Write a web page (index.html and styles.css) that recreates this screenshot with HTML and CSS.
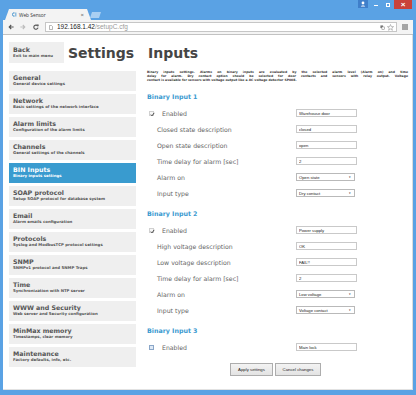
FILE: index.html
```html
<!DOCTYPE html>
<html lang="en">
<head>
<meta charset="utf-8">
<title>Web Sensor</title>
<link rel="stylesheet" href="styles.css">
</head>
<body>
<div class="window">
  <div class="titlebar">
    <div class="tabstrip">
      <div class="tab">
        <svg class="favicon" viewBox="0 0 6 6"><path d="M3.2 1.1A2 2 0 1 0 3.2 4.9" fill="none" stroke="#2b86c8" stroke-width="1"/><path d="M4.6 0.6V5.4" stroke="#2b86c8" stroke-width="0.9"/></svg>
        <span class="tab-title">Web Sensor</span>
        <span class="tab-close">×</span>
      </div>
      <div class="newtab"></div>
    </div>
    <div class="caption">
      <div class="cap-user"><svg viewBox="0 0 10 8"><circle cx="5" cy="3" r="1.4" fill="#fff"/><path d="M2.8 6.6C2.8 5.1 7.2 5.1 7.2 6.6Z" fill="#fff"/></svg></div>
      <div class="cap-btn"><span class="cap-min"></span></div>
      <div class="cap-btn"><span class="cap-max"></span></div>
      <div class="cap-close">×</div>
    </div>
  </div>
  <div class="toolbar">
    <svg class="nav-icon" viewBox="0 0 6 6"><path d="M5.6 3H1.2M3.2 1L1.2 3L3.2 5" fill="none" stroke="#555" stroke-width="1.1"/></svg>
    <svg class="nav-icon fwd" viewBox="0 0 6 6"><path d="M0.4 3H4.8M2.8 1L4.8 3L2.8 5" fill="none" stroke="#bdbdbd" stroke-width="1.1"/></svg>
    <svg class="nav-icon reload" viewBox="0 0 6 6"><path d="M4.8 2.2A2.1 2.1 0 1 0 5 3.6" fill="none" stroke="#555" stroke-width="1.1"/><path d="M3.6 0.6H5.6V2.6Z" fill="#555"/></svg>
    <div class="omnibox">
      <svg class="page-icon" viewBox="0 0 4 5"><path d="M0.5 0.5H2.5L3.5 1.5V4.5H0.5Z" fill="#fff" stroke="#888" stroke-width="0.6"/></svg>
      <span class="url"><span class="host">192.168.1.42</span><span class="path">/setupC.cfg</span></span>
      <svg class="omni-icon" viewBox="0 0 6 6"><rect x="0.5" y="0.5" width="3.2" height="3.2" fill="#777"/><rect x="2.3" y="2.3" width="3.2" height="3.2" fill="#fff" stroke="#777" stroke-width="0.6"/></svg>
      <svg class="omni-icon star" viewBox="0 0 8 8"><path d="M4 0.6L5 3H7.5L5.5 4.6L6.2 7.2L4 5.7L1.8 7.2L2.5 4.6L0.5 3H3Z" fill="none" stroke="#888" stroke-width="0.6"/></svg>
    </div>
    <svg class="menu-icon" viewBox="0 0 6 6"><path d="M0 1H6M0 3H6M0 5H6" stroke="#555" stroke-width="1"/></svg>
  </div>
  <div class="page">
    <div class="layout">
      <div class="head-left">
        <a class="back">
          <span class="item-title">Back</span>
          <span class="item-sub">Exit to main menu</span>
        </a>
        <h1 class="title">Settings</h1>
      </div>
      <h1 class="title main-title">Inputs</h1>

      <nav class="menu">
        <a class="item"><span class="item-title">General</span><span class="item-sub">General device settings</span></a>
        <a class="item"><span class="item-title">Network</span><span class="item-sub">Basic settings of the network interface</span></a>
        <a class="item"><span class="item-title">Alarm limits</span><span class="item-sub">Configuration of the alarm limits</span></a>
        <a class="item"><span class="item-title">Channels</span><span class="item-sub">General settings of the channels</span></a>
        <a class="item active"><span class="item-title">BIN Inputs</span><span class="item-sub">Binary inputs settings</span></a>
        <a class="item"><span class="item-title">SOAP protocol</span><span class="item-sub">Setup SOAP protocol for database system</span></a>
        <a class="item"><span class="item-title">Email</span><span class="item-sub">Alarm emails configuration</span></a>
        <a class="item"><span class="item-title">Protocols</span><span class="item-sub">Syslog and ModbusTCP protocol settings</span></a>
        <a class="item"><span class="item-title">SNMP</span><span class="item-sub">SNMPv1 protocol and SNMP Traps</span></a>
        <a class="item"><span class="item-title">Time</span><span class="item-sub">Synchronization with NTP server</span></a>
        <a class="item"><span class="item-title">WWW and Security</span><span class="item-sub">Web server and Security configuration</span></a>
        <a class="item"><span class="item-title">MinMax memory</span><span class="item-sub">Timestamps, clear memory</span></a>
        <a class="item"><span class="item-title">Maintenance</span><span class="item-sub">Factory defaults, info, etc.</span></a>
      </nav>

      <main class="content">
        <p class="intro"><span class="line just">Binary inputs settings. Alarms on binary inputs are evaluated by the selected alarm level (Alarm on) and time</span> <span class="line just">delay for alarm. Dry contact option should be selected for door contacts and sensors with relay output. Voltage</span> <span class="line">contact is available for sensors with voltage output like a AC voltage detector SP008.</span></p>

        <section class="group">
          <h2>Binary Input 1</h2>
          <div class="row"><div class="lbl check-lbl"><span class="cb checked"><svg viewBox="0 0 5 5"><path d="M0.9 2.6L2 3.8L4.2 0.9" fill="none" stroke="#333" stroke-width="0.9"/></svg></span>Enabled</div><input class="field" type="text" value="Warehouse door"></div>
          <div class="row"><div class="lbl">Closed state description</div><input class="field" type="text" value="closed"></div>
          <div class="row"><div class="lbl">Open state description</div><input class="field" type="text" value="open"></div>
          <div class="row"><div class="lbl">Time delay for alarm [sec]</div><input class="field" type="text" value="2"></div>
          <div class="row"><div class="lbl">Alarm on</div><div class="select"><span>Open state</span><span class="arrow">▼</span></div></div>
          <div class="row"><div class="lbl">Input type</div><div class="select"><span>Dry contact</span><span class="arrow">▼</span></div></div>
        </section>

        <section class="group">
          <h2>Binary Input 2</h2>
          <div class="row"><div class="lbl check-lbl"><span class="cb checked"><svg viewBox="0 0 5 5"><path d="M0.9 2.6L2 3.8L4.2 0.9" fill="none" stroke="#333" stroke-width="0.9"/></svg></span>Enabled</div><input class="field" type="text" value="Power supply"></div>
          <div class="row"><div class="lbl">High voltage description</div><input class="field" type="text" value="OK"></div>
          <div class="row"><div class="lbl">Low voltage description</div><input class="field" type="text" value="FAIL!!"></div>
          <div class="row"><div class="lbl">Time delay for alarm [sec]</div><input class="field" type="text" value="2"></div>
          <div class="row"><div class="lbl">Alarm on</div><div class="select"><span>Low voltage</span><span class="arrow">▼</span></div></div>
          <div class="row"><div class="lbl">Input type</div><div class="select"><span>Voltage contact</span><span class="arrow">▼</span></div></div>
        </section>

        <section class="group">
          <h2>Binary Input 3</h2>
          <div class="row"><div class="lbl check-lbl"><span class="cb unchecked"></span>Enabled</div><input class="field" type="text" value="Main lock"></div>
        </section>

        <div class="actions">
          <button class="btn apply" type="button">Apply settings</button>
          <button class="btn cancel" type="button">Cancel changes</button>
        </div>
      </main>
    </div>
  </div>
</div>
</body>
</html>
```

FILE: styles.css
```css
html, body {
  margin: 0;
  padding: 0;
}

.window {
  width: 416px;
  height: 395px;
  box-sizing: border-box;
  background: #5aa2e4;
  padding: 0 3px 5px;
  display: flex;
  flex-direction: column;
  overflow: hidden;
  font-family: "DejaVu Sans", Verdana, sans-serif;
}

/* ---------- title bar ---------- */
.titlebar {
  height: 20px;
  flex: none;
  display: flex;
  justify-content: space-between;
}

.tabstrip {
  display: flex;
  align-items: flex-end;
  padding-left: 2px;
}

.tab {
  width: 86px;
  height: 11px;
  box-sizing: border-box;
  background: #f3f3f3;
  clip-path: polygon(0 100%, 4px 0, calc(100% - 4px) 0, 100% 100%);
  display: flex;
  align-items: center;
  padding: 0 7px 0 7px;
  font-family: "Open Sans", "Liberation Sans", sans-serif;
  font-size: 4.8px;
  color: #333;
}

.favicon {
  width: 5px;
  height: 5px;
  margin-right: 2px;
  flex: none;
}

.tab-title {
  flex: 1;
}

.tab-close {
  font-size: 6px;
  line-height: 6px;
  color: #555;
}

.newtab {
  width: 11px;
  height: 6px;
  margin: 0 0 2px -1px;
  background: #a9cff2;
  clip-path: polygon(2px 0, 100% 0, calc(100% - 2px) 100%, 0 100%);
}

.caption {
  display: flex;
  align-items: flex-start;
  margin-right: 1px;
}

.cap-user {
  width: 10px;
  height: 8px;
  background: #3f7fca;
  margin-right: 2px;
}

.cap-user svg {
  display: block;
  width: 10px;
  height: 8px;
}

.cap-btn {
  width: 12px;
  height: 9px;
  display: flex;
  align-items: center;
  justify-content: center;
}

.cap-min {
  width: 4px;
  height: 1px;
  background: #fff;
  margin-top: 2px;
}

.cap-max {
  width: 4px;
  height: 4px;
  box-sizing: border-box;
  border: 1px solid #fff;
}

.cap-close {
  width: 18px;
  height: 9px;
  background: #c9423b;
  color: #fff;
  font-family: "Liberation Sans", sans-serif;
  font-size: 8px;
  line-height: 9px;
  font-weight: bold;
  text-align: center;
}

/* ---------- toolbar ---------- */
.toolbar {
  height: 15px;
  flex: none;
  box-sizing: border-box;
  background: #f4f4f4;
  border-bottom: 1px solid #c2c2c2;
  display: flex;
  align-items: center;
  padding-left: 5px;
}

.nav-icon {
  width: 6px;
  height: 6px;
  flex: none;
}

.nav-icon.fwd {
  margin-left: 6px;
}

.nav-icon.reload {
  margin-left: 7px;
}

.omnibox {
  margin-left: 6px;
  width: 352px;
  height: 10px;
  box-sizing: border-box;
  background: #fff;
  border: 1px solid #c6c6c6;
  display: flex;
  align-items: center;
  padding: 0 2px 0 3px;
}

.page-icon {
  width: 4px;
  height: 5px;
  flex: none;
}

.url {
  margin-left: 4px;
  flex: 1;
  font-family: "Liberation Sans", Arial, sans-serif;
  font-size: 6.5px;
  line-height: 8px;
  white-space: nowrap;
}

.host {
  color: #222;
}

.path {
  color: #9a9a9a;
}

.omni-icon {
  width: 5px;
  height: 5px;
  flex: none;
}

.omni-icon.star {
  width: 7px;
  height: 7px;
  margin-left: 2px;
}

.menu-icon {
  width: 6px;
  height: 6px;
  margin-left: 5px;
  flex: none;
}

/* ---------- page ---------- */
.page {
  flex: 1;
  background: #fff;
  border-right: 1px solid #dcdcdc;
  border-bottom: 1px solid #e2e2e2;
  overflow: hidden;
}

.layout {
  display: grid;
  grid-template-columns: 127px 261px;
  column-gap: 11px;
  row-gap: 8px;
  padding: 7px 0 0 6px;
  align-items: start;
}

.head-left {
  display: flex;
  align-items: center;
  gap: 4px;
}

.back {
  width: 55px;
  height: 21px;
  box-sizing: border-box;
  background: #efefef;
  padding: 4px 4px 0;
  display: flex;
  flex-direction: column;
}

.title {
  margin: 0;
  font-size: 14px;
  line-height: 16px;
  font-weight: bold;
  color: #454545;
}

.main-title {
  align-self: center;
  margin-left: 1px;
}

.menu {
  display: flex;
  flex-direction: column;
  gap: 3px;
}

.item {
  height: 20px;
  box-sizing: border-box;
  background: #efefef;
  padding: 3px 4px 0;
  display: flex;
  flex-direction: column;
}

.item-title {
  font-size: 6.3px;
  line-height: 7px;
  font-weight: bold;
  color: #555;
  white-space: nowrap;
}

.item-sub {
  font-size: 3.9px;
  line-height: 5px;
  font-weight: bold;
  color: #555;
  white-space: nowrap;
}

.item.active {
  background: #399bcf;
}

.item.active .item-title,
.item.active .item-sub {
  color: #fff;
}

/* ---------- content ---------- */
.content {
  display: flex;
  flex-direction: column;
}

.intro {
  margin: 0 0 2px;
  font-size: 3.1px;
  line-height: 3.8px;
  font-weight: bold;
  color: #333;
}

.intro .line {
  display: block;
  white-space: nowrap;
}

.intro .line.just {
  text-align: justify;
  text-align-last: justify;
  white-space: normal;
}

.group h2 {
  margin: 9px 0 4px;
  font-size: 6.3px;
  line-height: 8px;
  font-weight: bold;
  color: #3a9ad0;
}

.row {
  height: 16px;
  display: flex;
  align-items: center;
}

.lbl {
  width: 149px;
  box-sizing: border-box;
  padding-left: 10px;
  font-size: 6.2px;
  color: #666;
  white-space: nowrap;
  display: flex;
  align-items: center;
}

.lbl.check-lbl {
  padding-left: 2px;
}

.cb {
  width: 5px;
  height: 5px;
  box-sizing: border-box;
  margin-right: 8px;
  flex: none;
}

.cb svg {
  display: block;
  width: 5px;
  height: 5px;
}

.cb.checked {
  border: 0.5px solid #d0d0d0;
  background: #f7f7f7;
}

.cb.unchecked {
  border: 1px solid #8aa6c8;
  background: #dfe9f5;
}

.field {
  width: 61px;
  height: 8px;
  box-sizing: border-box;
  margin: 0;
  padding: 0 2px;
  border: 1px solid #c9c9c9;
  border-radius: 0;
  background: #fff;
  font-family: "Liberation Sans", Arial, sans-serif;
  font-size: 4.2px;
  line-height: 6px;
  color: #222;
  outline: none;
}

.select {
  width: 59px;
  height: 8px;
  box-sizing: border-box;
  border: 1px solid #b9b9b9;
  background: #fff;
  display: flex;
  align-items: center;
  justify-content: space-between;
  padding: 0 2px 0 2px;
  font-family: "Liberation Sans", Arial, sans-serif;
  font-size: 4.2px;
  color: #222;
}

.select .arrow {
  font-size: 2.6px;
  color: #333;
  margin-right: 1px;
}

.actions {
  display: flex;
  justify-content: center;
  gap: 2px;
  margin-top: 8px;
  padding-right: 4px;
}

.btn {
  height: 13px;
  margin: 0;
  padding: 0;
  box-sizing: border-box;
  border: 1px solid #adadad;
  border-radius: 0;
  background: linear-gradient(#f3f3f3, #e3e3e3);
  font-family: "Liberation Sans", Arial, sans-serif;
  font-size: 4.3px;
  color: #222;
}

.btn.apply {
  width: 43px;
}

.btn.cancel {
  width: 46px;
}
```
